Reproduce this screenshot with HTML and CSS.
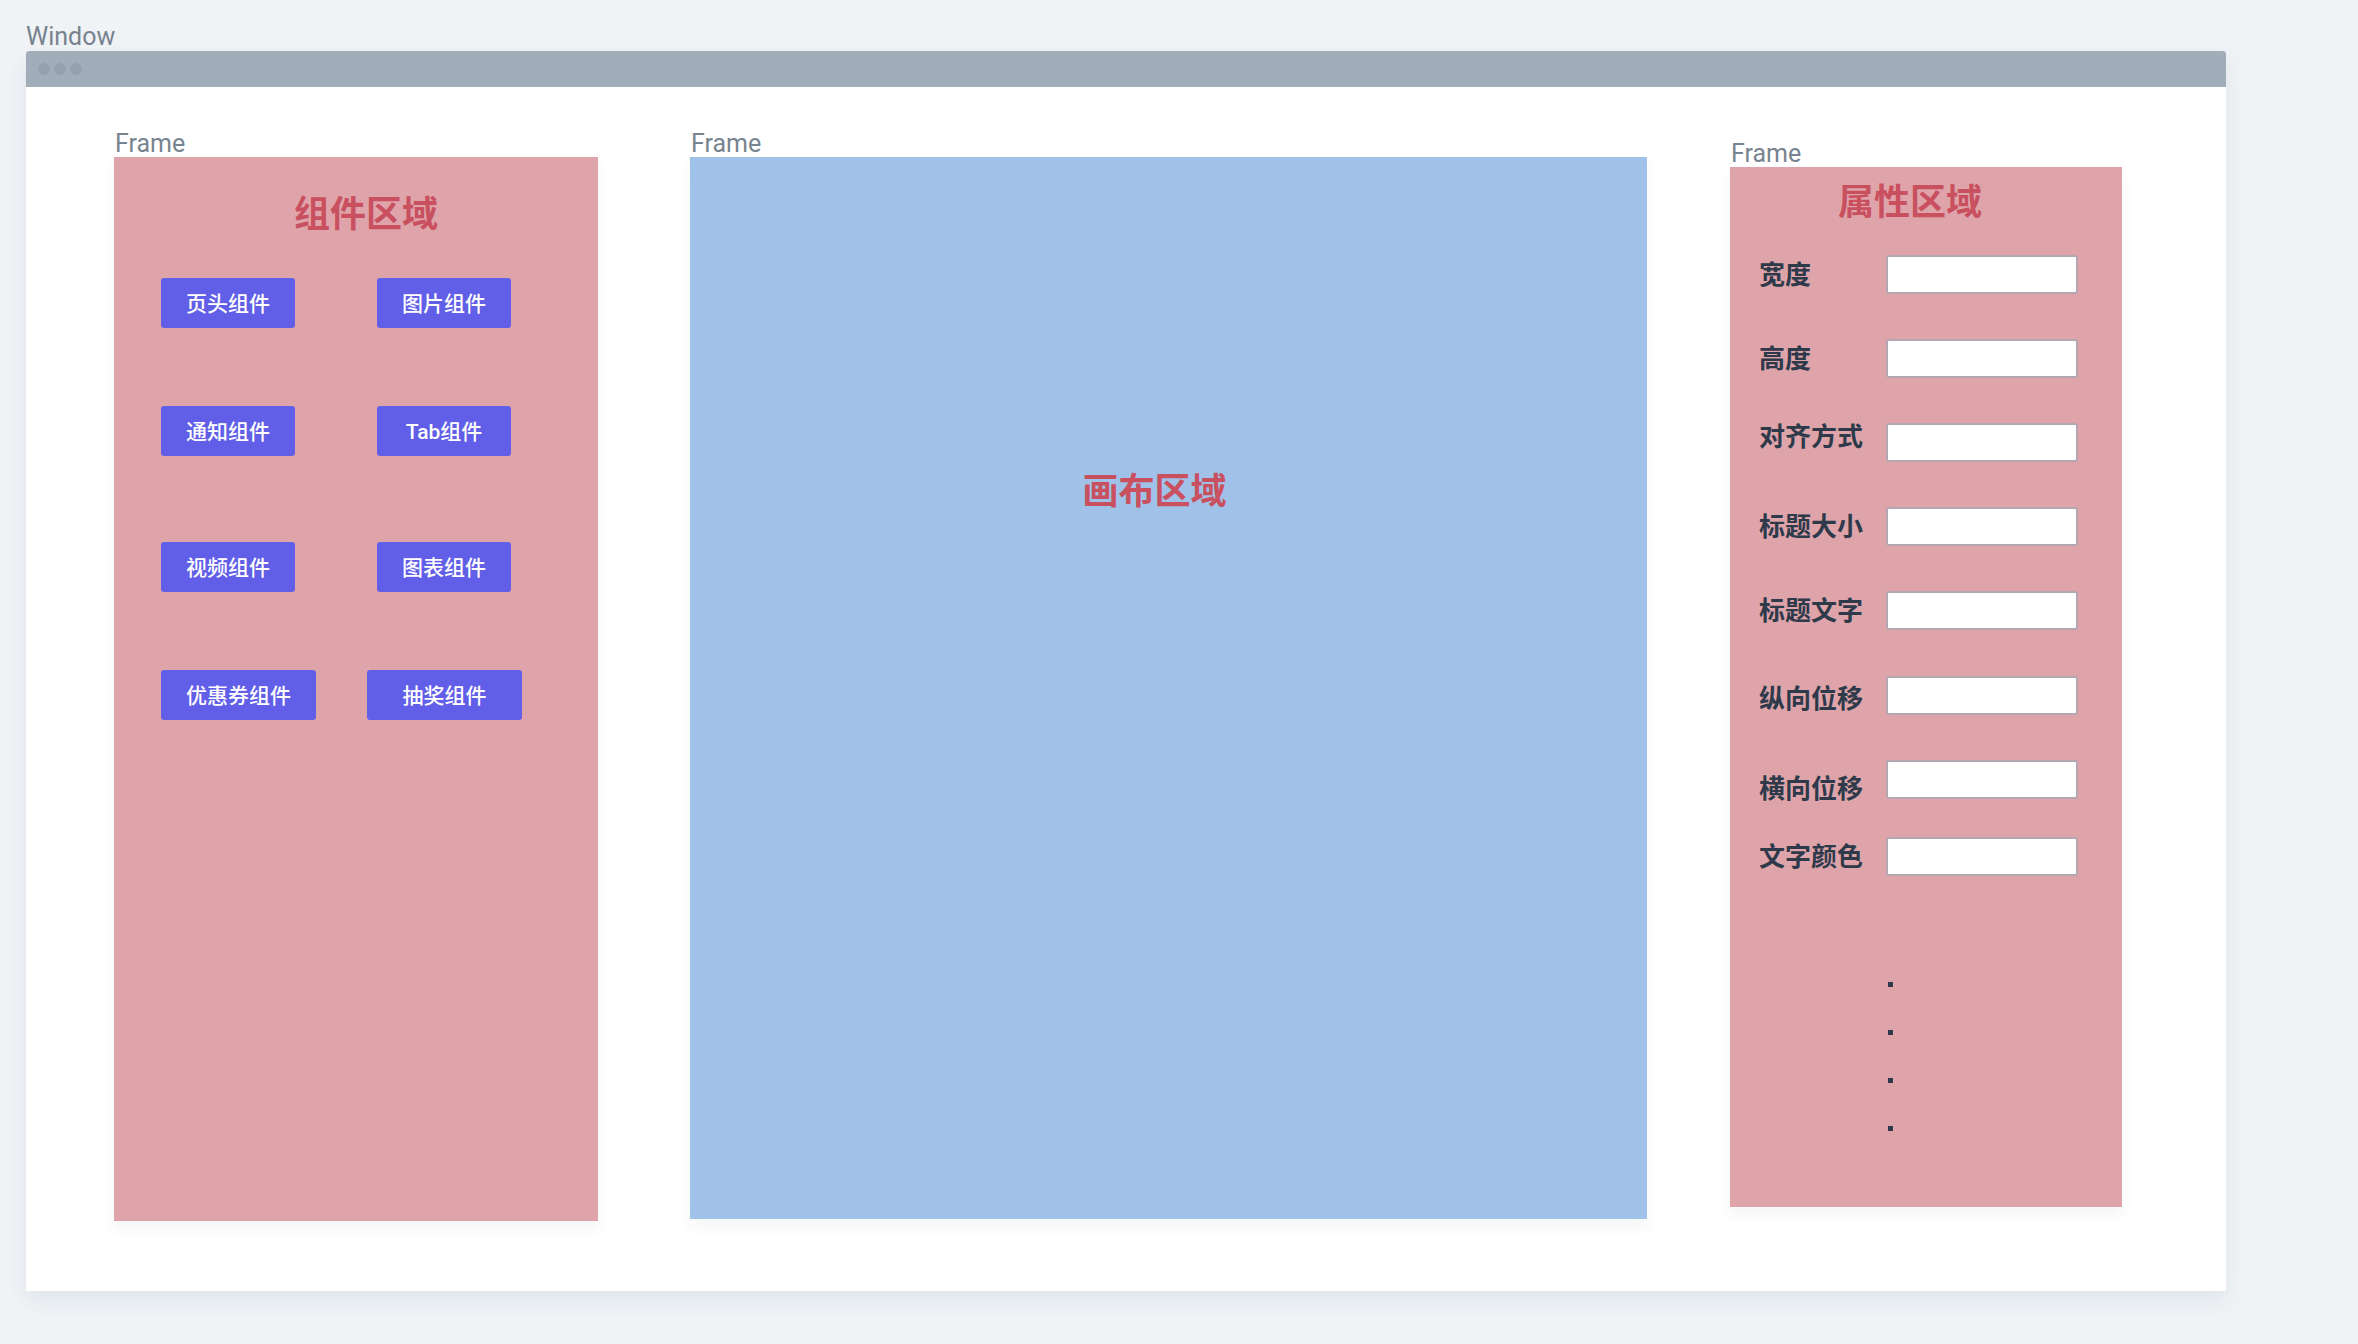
FILE: index.html
```html
<!DOCTYPE html>
<html lang="zh-CN">
<head>
<meta charset="utf-8">
<title>Window</title>
<link rel="stylesheet" href="styles.css">
</head>
<body>
<div class="page">
  <div class="win-label">Window</div>
  <div class="window">
    <div class="titlebar">
      <span class="dot"></span><span class="dot"></span><span class="dot"></span>
    </div>
    <div class="content">
      <div class="col col-left">
        <div class="frame-label">Frame</div>
        <div class="panel panel-pink panel-left">
          <div class="title title-left">组件区域</div>
          <div class="btn-row row-1">
            <div class="btn">页头组件</div>
            <div class="btn">图片组件</div>
          </div>
          <div class="btn-row row-2">
            <div class="btn">通知组件</div>
            <div class="btn">Tab组件</div>
          </div>
          <div class="btn-row row-3">
            <div class="btn">视频组件</div>
            <div class="btn">图表组件</div>
          </div>
          <div class="btn-row row-4">
            <div class="btn btn-wide">优惠券组件</div>
            <div class="btn btn-wide">抽奖组件</div>
          </div>
        </div>
      </div>
      <div class="col col-mid">
        <div class="frame-label">Frame</div>
        <div class="panel panel-blue">
          <div class="title title-canvas">画布区域</div>
        </div>
      </div>
      <div class="col col-right">
        <div class="frame-label">Frame</div>
        <div class="panel panel-pink panel-right">
          <div class="title title-right">属性区域</div>
          <div class="form">
            <div class="field"><span class="lbl">宽度</span><span class="input"></span></div>
            <div class="field"><span class="lbl">高度</span><span class="input"></span></div>
            <div class="field"><span class="lbl lbl-up">对齐方式</span><span class="input"></span></div>
            <div class="field"><span class="lbl">标题大小</span><span class="input"></span></div>
            <div class="field"><span class="lbl">标题文字</span><span class="input"></span></div>
            <div class="field field-6"><span class="lbl lbl-down-s">纵向位移</span><span class="input"></span></div>
            <div class="field"><span class="lbl lbl-down">横向位移</span><span class="input"></span></div>
            <div class="field field-last"><span class="lbl">文字颜色</span><span class="input"></span></div>
          </div>
          <div class="more">
            <span class="sq"></span><span class="sq"></span><span class="sq"></span><span class="sq"></span>
          </div>
        </div>
      </div>
    </div>
  </div>
</div>
</body>
</html>
```
FILE: styles.css
```css
* { box-sizing: border-box; }

html, body {
  margin: 0;
  padding: 0;
  background: #eff3f6;
}

body {
  font-family: Roboto, "Noto Sans CJK SC", sans-serif;
  width: 2358px;
  height: 1344px;
  overflow: hidden;
}

.page {
  padding: 23px 0 0 26px;
}

.win-label {
  font-size: 25px;
  line-height: 28px;
  color: #77838f;
}

.window {
  width: 2200px;
  height: 1240px;
  background: #ffffff;
  border-radius: 3px 3px 0 0;
  box-shadow: 0 10px 22px rgba(40, 60, 80, 0.07);
  display: flex;
  flex-direction: column;
}

.titlebar {
  height: 36px;
  background: #a1adb9;
  border-radius: 3px 3px 0 0;
  display: flex;
  align-items: center;
  padding-left: 12px;
  gap: 4px;
}

.dot {
  width: 12px;
  height: 12px;
  border-radius: 50%;
  background: #95a1ad;
}

.content {
  display: flex;
  align-items: flex-start;
  padding: 40px 0 0 88px;
}

.col {
  display: flex;
  flex-direction: column;
}

.col-left { width: 484px; }
.col-mid { width: 957px; margin-left: 92px; }
.col-right { width: 392px; margin-left: 83px; margin-top: 10px; }

.frame-label {
  font-size: 25px;
  line-height: 27px;
  padding-top: 3px;
  color: #77838f;
  padding-left: 1px;
}

.panel {
  box-shadow: 0 8px 14px rgba(40, 60, 80, 0.05);
}

.panel-pink { background: #dfa4aa; }
.panel-blue { background: #a0c2e8; height: 1062px; }
.panel-left { height: 1064px; }
.panel-right { height: 1040px; }

.title {
  font-size: 36px;
  line-height: 44px;
  font-weight: 700;
  color: #c9505f;
  text-align: center;
}

.title-left { padding: 36px 0 0 20px; }
.title-right { padding: 14px 32px 0 0; }
.title-canvas { padding: 313px 28px 0 0; }

.btn-row {
  display: flex;
  padding-left: 47px;
  gap: 82px;
}

.row-1 { margin-top: 41px; }
.row-2 { margin-top: 78px; }
.row-3 { margin-top: 86px; }
.row-4 { margin-top: 78px; gap: 51px; }

.btn {
  width: 134px;
  height: 50px;
  background: #615ee8;
  border-radius: 3px;
  color: #ffffff;
  font-size: 21px;
  font-weight: 500;
  padding-bottom: 2px;
  display: flex;
  align-items: center;
  justify-content: center;
}

.btn-wide { width: 155px; }

.form {
  margin-top: 30px;
  display: flex;
  flex-direction: column;
  gap: 45px;
}

.field {
  display: flex;
  align-items: center;
  height: 39px;
  padding-left: 29px;
}

.field-6 { margin-top: 1px; }
.field-last { margin-top: -7px; }

.lbl {
  width: 127px;
  font-size: 26px;
  font-weight: 700;
  color: #2e3a4a;
  line-height: 32px;
  white-space: nowrap;
}

.lbl-up { margin-bottom: 12px; }
.lbl-down { margin-top: 18px; }
.lbl-down-s { margin-top: 6px; }

.input {
  width: 192px;
  height: 39px;
  background: #ffffff;
  border: 2px solid #b3a7b2;
  border-radius: 3px;
}

.more {
  display: flex;
  flex-direction: column;
  gap: 43px;
  margin-top: 106px;
  padding-left: 158px;
}

.sq {
  width: 5px;
  height: 5px;
  background: #2e3a4a;
}
```
